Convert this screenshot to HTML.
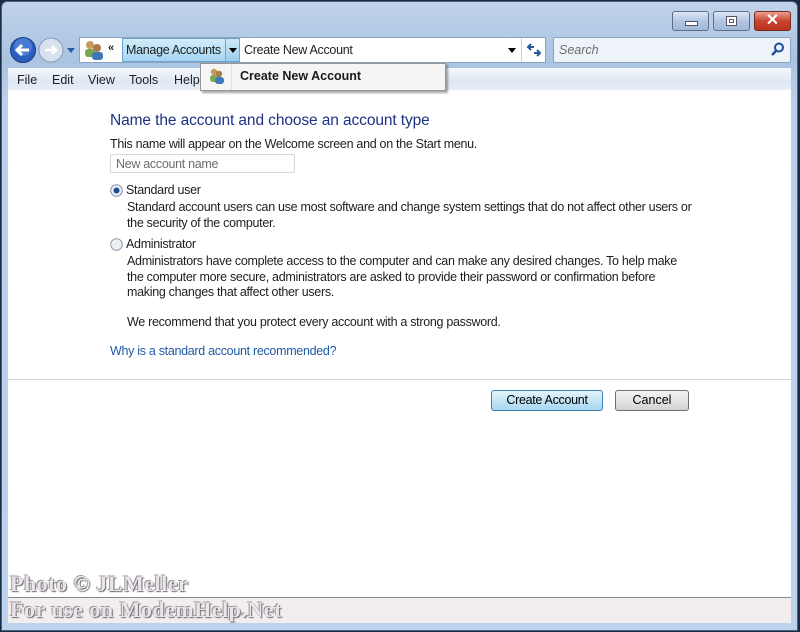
<!DOCTYPE html>
<html><head><style>
*{margin:0;padding:0;box-sizing:border-box}
body{width:800px;height:632px;overflow:hidden;font-family:"Liberation Sans",sans-serif;font-size:12px;background:#1c2a44;position:relative}
.frame{position:absolute;left:1px;top:1px;width:797px;height:630px;background:linear-gradient(#c0d3ea 0px,#a9c3e2 60px,#b9d1ec 100px,#bcd3ee 100%);border:1px solid #4b5f7e;border-radius:6px 6px 0 0}
.abs{position:absolute}
.btn{position:absolute;top:11px;height:20px;border:1px solid #5d6f8b;border-radius:3px;background:linear-gradient(#dce7f5,#b3c6e2 50%,#a2b9db)}
.txt{color:#1e1e1e;font-size:12.5px;white-space:nowrap}
.p{color:#1e1e1e;font-size:12.5px;white-space:nowrap;letter-spacing:-0.3px;line-height:15.5px}
.wm{font-family:'Liberation Serif',serif;font-weight:bold;font-size:22px;color:#ece4ec;text-shadow:1px 1px 1px #666,-1px -1px 0 #999;white-space:nowrap;letter-spacing:0.5px}
</style></head><body>
<div class="frame"></div>
<div class="btn" style="left:672px;width:37px"><div class="abs" style="left:12px;top:9px;width:13px;height:5px;background:#fff;border:1px solid #556"></div></div>
<div class="btn" style="left:713px;width:37px"><div class="abs" style="left:12px;top:4px;width:11px;height:10px;background:#fff;border:1px solid #556"><div class="abs" style="left:2px;top:2px;width:5px;height:4px;border:1px solid #556"></div></div></div>
<div class="btn" style="left:754px;width:37px;background:linear-gradient(#e8a090,#c9452f 50%,#b8321c);border-color:#7a2a1e"><div class="abs" style="left:0;top:0;width:35px;line-height:18px;text-align:center;color:#fff;font-weight:bold;font-size:16px">✕</div></div>
<svg class="abs" style="left:9px;top:36px" width="72" height="28">
<circle cx="14" cy="14" r="12.5" fill="#2a5fbf" stroke="#1b3a7a"/>
<circle cx="14" cy="11" r="9" fill="#5b8fe0" opacity=".6"/>
<path d="M20 14H9M13 9l-5 5 5 5" stroke="#fff" stroke-width="3" fill="none"/>
<circle cx="42" cy="14" r="12" fill="#d8e2ef" stroke="#8a9bb5"/>
<path d="M36 14h11M43 10l4 4-4 4" stroke="#fff" stroke-width="2.5" fill="none"/>
<path d="M58 12h8l-4 5z" fill="#2d5aa8"/>
</svg>
<div class="abs" style="left:79px;top:37px;width:467px;height:26px;background:#fff;border:1px solid #8ea3c0"></div>
<svg class="abs" style="left:83px;top:39px" width="22" height="22"><circle cx="7" cy="6" r="4" fill="#c89a5a"/><rect x="2" y="10" width="10" height="8" rx="3" fill="#7aa852"/><circle cx="14" cy="9" r="4" fill="#a87a4a"/><rect x="9" y="13" width="11" height="8" rx="3" fill="#3f78b8"/></svg>
<div class="abs txt" style="left:108px;top:42px;font-weight:bold;font-size:11px">«</div>
<div class="abs" style="left:122px;top:38px;width:104px;height:24px;background:linear-gradient(#d2ecf9,#a5d6f2);border:1px solid #6aa4cf"></div>
<div class="abs txt" style="left:126px;top:43px;letter-spacing:-0.3px">Manage Accounts</div>
<div class="abs" style="left:225px;top:38px;width:15px;height:24px;background:linear-gradient(#cde8f7,#9ccdeb);border:1px solid #6aa4cf"></div>
<div class="abs" style="left:229px;top:48px;border:4px solid transparent;border-top:5px solid #000;border-bottom:0"></div>
<div class="abs txt" style="left:244px;top:43px;letter-spacing:-0.3px">Create New Account</div>
<div class="abs" style="left:508px;top:48px;border:4px solid transparent;border-top:5px solid #000;border-bottom:0"></div>
<div class="abs" style="left:521px;top:38px;width:1px;height:24px;background:#c8d2e0"></div>
<svg class="abs" style="left:526px;top:42px" width="16" height="16"><path d="M2 5h6M5 2L2 5l3 3M14 11H8M11 8l3 3-3 3" stroke="#2a5a9a" stroke-width="2" fill="none"/></svg>
<div class="abs" style="left:553px;top:37px;width:238px;height:26px;background:#eef3fa;border:1px solid #8ea3c0;border-radius:2px"></div>
<div class="abs" style="left:559px;top:43px;color:#6d6d6d;font-style:italic;font-size:12.5px">Search</div>
<svg class="abs" style="left:771px;top:42px" width="14" height="14"><circle cx="8" cy="5.5" r="4" stroke="#1f4f9a" stroke-width="2" fill="none"/><path d="M5 9l-4 4" stroke="#1f4f9a" stroke-width="2.5"/></svg>
<div class="abs" style="left:8px;top:68px;width:783px;height:22px;background:linear-gradient(#f5f8fc,#dfe8f4 60%,#e6edf7)"></div>
<div class="abs txt" style="left:17px;top:73px">File</div>
<div class="abs txt" style="left:52px;top:73px">Edit</div>
<div class="abs txt" style="left:88px;top:73px">View</div>
<div class="abs txt" style="left:129px;top:73px">Tools</div>
<div class="abs txt" style="left:174px;top:73px">Help</div>
<div class="abs" style="left:8px;top:90px;width:783px;height:508px;background:#fff"></div>
<div class="abs" style="left:200px;top:63px;width:246px;height:28px;background:#f5f5f5;border:1px solid #979797;box-shadow:2px 2px 2px rgba(0,0,0,.35)"></div>
<div class="abs" style="left:231px;top:64px;width:1px;height:26px;background:#e0e0e0"></div>
<svg class="abs" style="left:208px;top:67px" width="18" height="18"><circle cx="6" cy="5" r="3.2" fill="#c89a5a"/><rect x="2" y="8" width="8" height="7" rx="3" fill="#7aa852"/><circle cx="11" cy="7" r="3.2" fill="#a87a4a"/><rect x="7" y="10" width="9" height="7" rx="3" fill="#3f78b8"/></svg>
<div class="abs" style="left:240px;top:69px;font-weight:bold;font-size:12.5px;color:#1a1a1a">Create New Account</div>

<div class="abs" style="left:110px;top:112px;font-size:15.5px;color:#1e3287;white-space:nowrap;letter-spacing:-0.1px">Name the account and choose an account type</div>
<div class="abs p" style="left:110px;top:137px">This name will appear on the Welcome screen and on the Start menu.</div>
<div class="abs" style="left:110px;top:154px;width:185px;height:19px;border:1px solid #d8d8d8;border-radius:2px"></div>
<div class="abs" style="left:116px;top:157px;color:#6d6d6d;font-size:12.5px;letter-spacing:-0.3px">New account name</div>
<svg class="abs" style="left:110px;top:184px" width="13" height="13"><circle cx="6.5" cy="6.5" r="5.8" fill="#eef" stroke="#8592a4"/><circle cx="6.5" cy="6.5" r="3" fill="#1f4e8f"/></svg>
<div class="abs p" style="left:126px;top:183px">Standard user</div>
<div class="abs p" style="left:127px;top:200px">Standard account users can use most software and change system settings that do not affect other users or<br>the security of the computer.</div>
<svg class="abs" style="left:110px;top:238px" width="13" height="13"><circle cx="6.5" cy="6.5" r="5.8" fill="#eceef2" stroke="#8f9aab"/></svg>
<div class="abs p" style="left:126px;top:237px">Administrator</div>
<div class="abs p" style="left:127px;top:254px">Administrators have complete access to the computer and can make any desired changes. To help make<br>the computer more secure, administrators are asked to provide their password or confirmation before<br>making changes that affect other users.</div>
<div class="abs p" style="left:127px;top:315px">We recommend that you protect every account with a strong password.</div>
<div class="abs p" style="left:110px;top:344px;color:#1e5aa8">Why is a standard account recommended?</div>
<div class="abs" style="left:8px;top:379px;width:783px;height:1px;background:#d5d5d5"></div>
<div class="abs" style="left:491px;top:390px;width:112px;height:21px;border:1px solid #3c7fb1;border-radius:3px;background:linear-gradient(#e5f4fc,#c4e5f6 50%,#a8d6f2);text-align:center;line-height:19px;font-size:12.5px;letter-spacing:-0.3px">Create Account</div>
<div class="abs" style="left:615px;top:390px;width:74px;height:21px;border:1px solid #707070;border-radius:3px;background:linear-gradient(#f2f2f2,#e4e4e4 50%,#d2d2d2);text-align:center;line-height:19px;font-size:12.5px">Cancel</div>
<div class="abs" style="left:8px;top:597px;width:783px;height:1px;background:#8a8a8a"></div>
<div class="abs" style="left:8px;top:598px;width:783px;height:25px;background:#f3eeee"></div>
<div class="abs wm" style="left:10px;top:571px">Photo © JLMeller</div>
<div class="abs wm" style="left:10px;top:597px">For use on ModemHelp.Net</div>
</body></html>
